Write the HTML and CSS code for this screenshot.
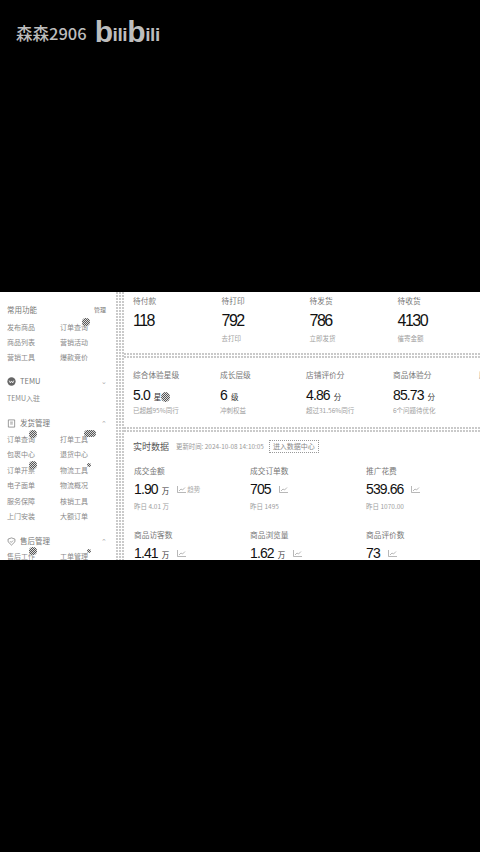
FILE: index.html
```html
<!DOCTYPE html>
<html>
<head>
    <title>森森2906</title>
    <link rel="stylesheet" href="styles.css">
</head>
<body>
    <div class="watermark">
        <span class="uploader">森森2906</span>
        <span class="logo"><i>b</i>ili<i>b</i>ili</span>
    </div>

    <div class="screen">
        <div class="sidebar">
            <div class="menu-head"><span>常用功能</span><span class="manage">管理</span></div>
            <div class="menu-grid">
                <span>发布商品</span><span class="has-badge">订单查询<b class="badge"></b></span>
                <span>商品列表</span><span>营销活动</span>
                <span>营销工具</span><span>爆款竞价</span>
            </div>

            <div class="group-head temu">
                <svg class="temu-icon" viewBox="0 0 10 10"><circle cx="5" cy="5" r="4.6" fill="#666"/><path d="M2.5 4l1.2 2.6L5 4.4l1.3 2.2L7.5 4" fill="none" stroke="#fff" stroke-width=".9"/></svg>
                <span>TEMU</span><span class="chevron">&#8964;</span>
            </div>
            <div class="menu-single">TEMU入驻</div>

            <div class="group-head ship">
                <svg class="group-icon" viewBox="0 0 10 10"><path d="M1.5 1h7v8h-7zM3.5 3.5h3M3.5 5.5h3" fill="none" stroke="#777" stroke-width=".8"/></svg>
                <span>发货管理</span><span class="chevron">&#8963;</span>
            </div>
            <div class="menu-grid dense">
                <span class="has-badge">订单查询<b class="badge"></b></span><span class="has-badge">打单工具<b class="badge wide"></b></span>
                <span>包裹中心</span><span>退货中心</span>
                <span class="has-badge">订单开票<b class="badge"></b></span><span class="has-badge">物流工具<b class="badge small"></b></span>
                <span>电子面单</span><span>物流概况</span>
                <span>服务保障</span><span>核销工具</span>
                <span>上门安装</span><span>大额订单</span>
            </div>

            <div class="group-head after">
                <svg class="group-icon" viewBox="0 0 10 10"><path d="M5 1l3.8 1.3v3L5 9 1.2 5.3v-3zM3.5 4.8l1.2 1.2 2-2" fill="none" stroke="#777" stroke-width=".8"/></svg>
                <span>售后管理</span><span class="chevron">&#8963;</span>
            </div>
            <div class="menu-grid dense tight">
                <span class="has-badge">售后工作<b class="badge"></b></span><span class="has-badge">工单管理<b class="badge small"></b></span>
            </div>
        </div>

        <div class="main">
            <div class="stats todo">
                <div class="stat"><div class="label">待付款</div><div class="value">118</div></div>
                <div class="stat"><div class="label">待打印</div><div class="value">792</div><div class="sub">去打印</div></div>
                <div class="stat"><div class="label">待发货</div><div class="value">786</div><div class="sub">立即发货</div></div>
                <div class="stat"><div class="label">待收货</div><div class="value">4130</div><div class="sub">催寄金额</div></div>
            </div>

            <div class="dots-h"></div>

            <div class="stats health">
                <div class="stat has-badge"><div class="label">综合体验星级</div><div class="value">5.0 <small>星</small></div><div class="sub">已超越95%同行</div><b class="badge cursor"></b></div>
                <div class="stat"><div class="label">成长层级</div><div class="value">6 <small>级</small></div><div class="sub">冲刺权益</div></div>
                <div class="stat"><div class="label">店铺评价分</div><div class="value">4.86 <small>分</small></div><div class="sub">超过31.56%同行</div></div>
                <div class="stat"><div class="label">商品体验分</div><div class="value">85.73 <small>分</small></div><div class="sub">6个问题待优化</div></div>
                <div class="stat"><div class="label">服务体验分</div></div>
            </div>

            <div class="dots-h"></div>

            <div class="realtime">
                <div class="realtime-head">
                    <span class="title">实时数据</span>
                    <span class="updated">更新时间: 2024-10-08 14:10:05</span>
                    <span class="data-btn">进入数据中心</span>
                </div>
                <div class="metrics">
                    <div class="metric">
                        <div class="label">成交金额</div>
                        <div class="value">1.90 <small>万</small><svg class="trend" viewBox="0 0 9 7"><path d="M.5 0v6.5H9M2 5l2-2 1.5 1L8 1.5" fill="none" stroke="#999" stroke-width=".7"/></svg><em>趋势</em></div>
                        <div class="sub">昨日 4.01 万</div>
                    </div>
                    <div class="metric">
                        <div class="label">成交订单数</div>
                        <div class="value">705<svg class="trend" viewBox="0 0 9 7"><path d="M.5 0v6.5H9M2 5l2-2 1.5 1L8 1.5" fill="none" stroke="#999" stroke-width=".7"/></svg></div>
                        <div class="sub">昨日 1495</div>
                    </div>
                    <div class="metric">
                        <div class="label">推广花费</div>
                        <div class="value">539.66<svg class="trend" viewBox="0 0 9 7"><path d="M.5 0v6.5H9M2 5l2-2 1.5 1L8 1.5" fill="none" stroke="#999" stroke-width=".7"/></svg></div>
                        <div class="sub">昨日 1070.00</div>
                    </div>
                    <div class="metric">
                        <div class="label">商品访客数</div>
                        <div class="value">1.41 <small>万</small><svg class="trend" viewBox="0 0 9 7"><path d="M.5 0v6.5H9M2 5l2-2 1.5 1L8 1.5" fill="none" stroke="#999" stroke-width=".7"/></svg></div>
                    </div>
                    <div class="metric">
                        <div class="label">商品浏览量</div>
                        <div class="value">1.62 <small>万</small><svg class="trend" viewBox="0 0 9 7"><path d="M.5 0v6.5H9M2 5l2-2 1.5 1L8 1.5" fill="none" stroke="#999" stroke-width=".7"/></svg></div>
                    </div>
                    <div class="metric">
                        <div class="label">商品评价数</div>
                        <div class="value">73<svg class="trend" viewBox="0 0 9 7"><path d="M.5 0v6.5H9M2 5l2-2 1.5 1L8 1.5" fill="none" stroke="#999" stroke-width=".7"/></svg></div>
                    </div>
                </div>
            </div>
        </div>
    </div>
</body>
</html>
```

FILE: styles.css
```css
body {
    margin: 0;
    background: #000;
    overflow: hidden;
    font-family: "Noto Sans CJK SC", "Noto Sans", sans-serif;
}
.watermark {
    height: 292px;
    box-sizing: border-box;
    padding: 23px 0 0 16px;
    display: flex;
    align-items: flex-start;
    gap: 8px;
    color: #bdbdbd;
}
.uploader {
    font-size: 16.5px;
    line-height: 20px;
    font-weight: 500;
    white-space: nowrap;
}
.logo {
    font-family: "Liberation Sans", sans-serif;
    font-size: 19px;
    font-weight: bold;
    letter-spacing: -.4px;
    line-height: 20px;
    margin-top: -1px;
    white-space: nowrap;
}
.logo i {
    font-style: normal;
    font-size: 30px;
    vertical-align: -1px;
}

.screen {
    height: 268px;
    background: #fff;
    display: flex;
    overflow: hidden;
}
.sidebar {
    width: 124px;
    flex: none;
    box-sizing: border-box;
    padding: 13px 0 0 7px;
    font-size: 7px;
    line-height: 10px;
    color: #8a8a8a;
    position: relative;
}
.sidebar::after {
    content: "";
    position: absolute;
    top: 0;
    bottom: 0;
    right: 0;
    width: 8px;
    background: radial-gradient(circle at 1px 1px, #c8c8c8 .7px, transparent .9px) 0 0 / 3px 3px;
}
.menu-head {
    display: flex;
    justify-content: space-between;
    width: 99px;
    font-size: 7.5px;
    color: #777;
}
.manage {
    font-size: 6px;
}
.menu-grid {
    display: grid;
    grid-template-columns: 53px 53px;
    grid-auto-rows: 15px;
    margin-top: 7px;
    white-space: nowrap;
}
.menu-grid.dense {
    grid-auto-rows: 15.4px;
    margin-top: 6px;
}
.menu-grid.tight {
    margin-top: 5px;
}
.group-head {
    display: flex;
    align-items: center;
    gap: 4px;
    width: 100px;
    font-size: 7.5px;
    color: #777;
}
.group-head .chevron {
    margin-left: auto;
    font-size: 7px;
    color: #aaa;
}
.temu {
    margin-top: 9px;
}
.ship {
    margin-top: 15px;
}
.after {
    margin-top: 10px;
}
.temu-icon, .group-icon {
    width: 9px;
    height: 9px;
    flex: none;
}
.menu-single {
    margin-top: 7px;
}
.has-badge {
    position: relative;
}
.badge {
    position: absolute;
    top: -4px;
    left: 22px;
    width: 8px;
    height: 8px;
    border-radius: 50%;
    background: repeating-conic-gradient(#555 0 25%, #ddd 0 50%) 0 0 / 2px 2px;
}
.badge.wide {
    width: 12px;
    height: 7px;
    left: 24px;
    border-radius: 4px;
}
.badge.small {
    width: 4px;
    height: 4px;
    top: -2px;
    left: 27px;
}
.badge.cursor {
    top: 23px;
    left: 28px;
    width: 9px;
    height: 10px;
}

.main {
    flex: 1;
    min-width: 0;
    overflow: hidden;
}
.dots-h {
    height: 6px;
    background: radial-gradient(circle at 1px 1px, #c8c8c8 .7px, transparent .9px) 0 0 / 3px 3px;
}
.stats {
    display: grid;
    box-sizing: border-box;
    white-space: nowrap;
}
.todo {
    grid-template-columns: 88.5px 88px 88px 1fr;
    height: 61px;
    padding: 3px 0 0 9px;
}
.health {
    grid-template-columns: 87px 86px 87px 86px 1fr;
    height: 68px;
    padding: 10px 0 0 9px;
}
.label {
    font-size: 7.7px;
    line-height: 11px;
    color: #777;
}
.value {
    color: #111;
    font-family: "Liberation Sans", sans-serif;
    font-size: 14px;
    letter-spacing: -.9px;
    line-height: 18px;
    display: flex;
    align-items: center;
    white-space: pre;
}
.todo .value {
    font-size: 16px;
    letter-spacing: -1.5px;
    margin-top: 6px;
}
.health .value {
    margin-top: 6px;
}
.value small {
    font-family: "Noto Sans CJK SC", sans-serif;
    font-size: 7.5px;
    letter-spacing: 0;
    line-height: 10px;
    margin-top: 3px;
    margin-left: 1px;
    color: #333;
}
.sub {
    font-size: 6.5px;
    line-height: 9px;
    color: #a0a0a0;
    margin-top: 4px;
}
.health .sub {
    margin-top: 2px;
}
.realtime {
    padding: 6px 0 0 9px;
}
.realtime-head {
    display: flex;
    align-items: center;
    height: 14px;
    white-space: nowrap;
}
.title {
    font-size: 9px;
    color: #555;
}
.updated {
    font-size: 6.4px;
    color: #999;
    margin-left: 7px;
}
.data-btn {
    margin-left: 5px;
    box-sizing: border-box;
    width: 50px;
    font-size: 7px;
    line-height: 11px;
    color: #888;
    border: 1px dotted #999;
    text-align: center;
}
.metrics {
    display: grid;
    grid-template-columns: 116px 116px 1fr;
    grid-auto-rows: 64px;
    margin-top: 12px;
    padding-left: 1px;
    white-space: nowrap;
}
.metric .value {
    margin-top: 4px;
}
.metric .sub {
    margin-top: 4px;
}
.trend {
    width: 9px;
    height: 7px;
    margin-left: 8px;
    flex: none;
}
.value em {
    font-family: "Noto Sans CJK SC", sans-serif;
    font-style: normal;
    font-size: 6.5px;
    letter-spacing: 0;
    color: #aaa;
    margin-left: 1px;
}
```
